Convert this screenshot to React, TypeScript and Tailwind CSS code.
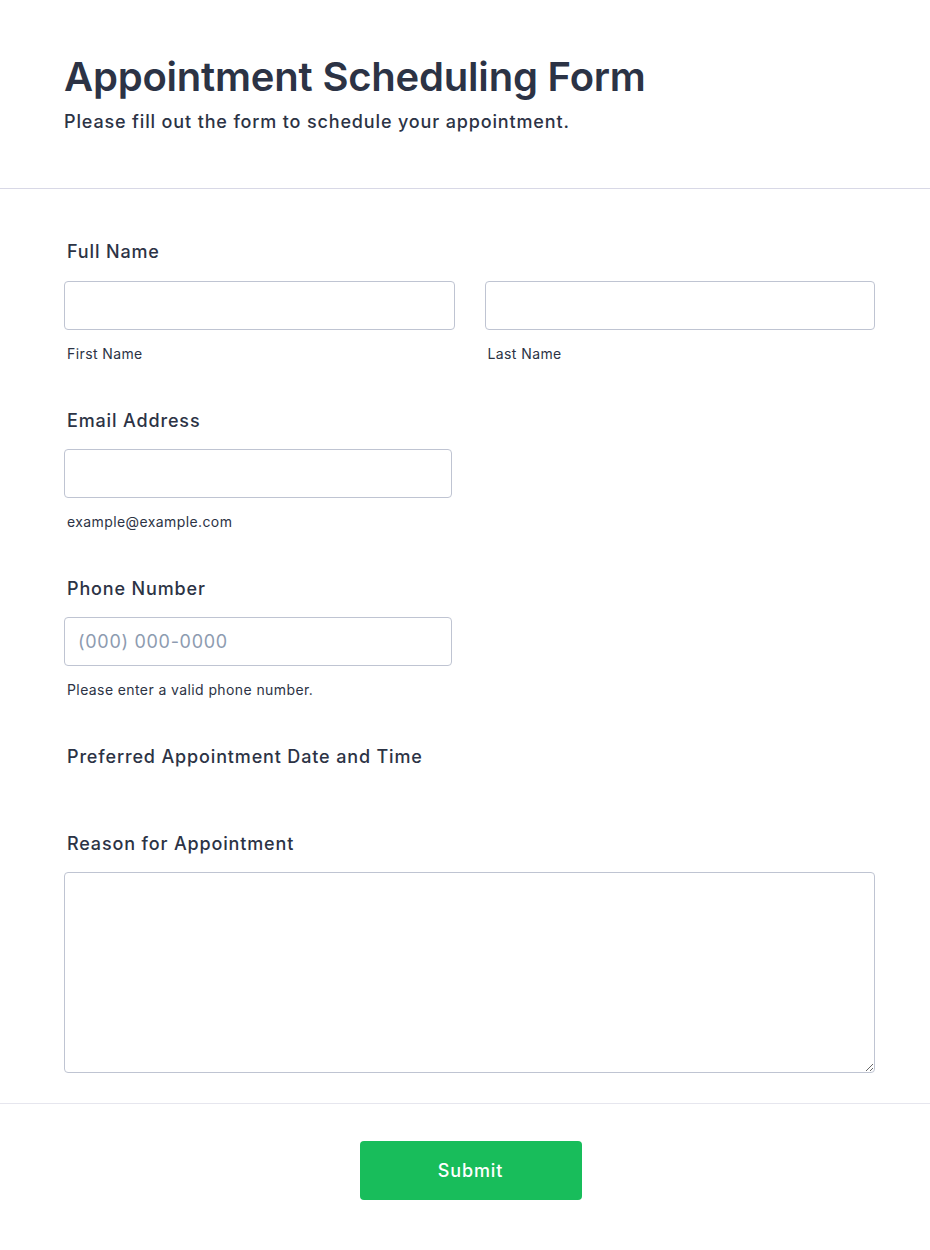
export default function App() {
  return (
    <div className="min-h-[1250px] bg-white text-[#2c3345]" style={{ fontFamily: "Inter, 'Noto Sans', sans-serif" }}>
      {/* header */}
      <div className="border-b border-[#d8d8e6] pl-16 pr-[55px] pt-[53px] pb-[54px]">
        <h1 className="text-[40px] leading-[48px] font-semibold tracking-[-0.2px]">Appointment Scheduling Form</h1>
        <p className="mt-[9px] text-[18px] leading-[24px] font-medium tracking-[0.85px]">
          Please fill out the form to schedule your appointment.
        </p>
      </div>

      {/* form body */}
      <div className="pl-16 pr-[55px] pt-[51px] pb-[30px] border-b border-[#e6e6ee]">
        {/* Full Name */}
        <div className="pl-[3px] text-[18px] leading-[24px] font-medium tracking-[0.85px]">Full Name</div>
        <div className="mt-[17px] grid grid-cols-2 gap-[30px]">
          <div>
            <input className="block w-full h-[49px] rounded border border-[#bfc4d2] px-3 outline-none" />
            <div className="mt-[14px] pl-[3px] text-[14px] leading-[20px] tracking-[0.4px]">First Name</div>
          </div>
          <div>
            <input className="block w-full h-[49px] rounded border border-[#bfc4d2] px-3 outline-none" />
            <div className="mt-[14px] pl-[3px] text-[14px] leading-[20px] tracking-[0.4px]">Last Name</div>
          </div>
        </div>

        {/* Email */}
        <div className="mt-[45px] pl-[3px] text-[18px] leading-[24px] font-medium tracking-[0.85px]">Email Address</div>
        <input className="mt-[16px] block w-[388px] h-[49px] rounded border border-[#bfc4d2] px-3 outline-none" />
        <div className="mt-[14px] pl-[3px] text-[14px] leading-[20px] tracking-[0.4px]">example@example.com</div>

        {/* Phone */}
        <div className="mt-[45px] pl-[3px] text-[18px] leading-[24px] font-medium tracking-[0.85px]">Phone Number</div>
        <input
          placeholder="(000) 000-0000"
          className="mt-[16px] block w-[388px] h-[49px] rounded border border-[#bfc4d2] px-[13px] text-[18px] tracking-[0.7px] outline-none placeholder:text-[#8d9bb0]"
        />
        <div className="mt-[14px] pl-[3px] text-[14px] leading-[20px] tracking-[0.4px]">Please enter a valid phone number.</div>

        {/* Date and time */}
        <div className="mt-[45px] pl-[3px] text-[18px] leading-[24px] font-medium tracking-[0.85px]">
          Preferred Appointment Date and Time
        </div>

        {/* Reason */}
        <div className="mt-[63px] pl-[3px] text-[18px] leading-[24px] font-medium tracking-[0.85px]">Reason for Appointment</div>
        <textarea className="mt-[16px] block w-full h-[201px] rounded border border-[#bfc4d2] p-3 outline-none" />
      </div>

      {/* submit */}
      <div className="flex justify-center pl-16 pr-[53px] pt-[37px]">
        <button className="w-[222px] h-[59px] rounded bg-[#18bd5b] text-white text-[18px] font-medium tracking-[0.9px]">
          Submit
        </button>
      </div>
    </div>
  );
}
